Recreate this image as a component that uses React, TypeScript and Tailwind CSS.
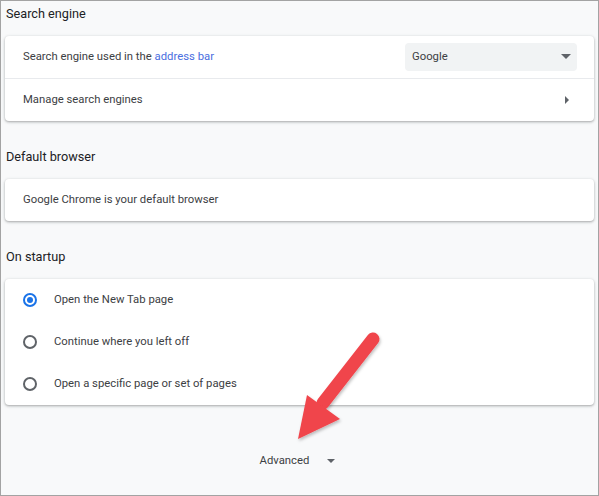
import React from "react";

const font = { fontFamily: "Roboto, 'Liberation Sans', sans-serif" };

function Card({ children }: { children: React.ReactNode }) {
  return (
    <div className="bg-white rounded-[4px] shadow-[0_1px_2px_rgba(60,64,67,0.3),0_1px_3px_1px_rgba(60,64,67,0.12)] flex flex-col">
      {children}
    </div>
  );
}

function Heading({ children, first }: { children: React.ReactNode; first?: boolean }) {
  return (
    <div className={`${first ? "pt-[3px]" : "mt-[26px]"} pb-[12px] pl-[1px] leading-[20px] text-[12.7px] text-[#202124]`}>
      {children}
    </div>
  );
}

function Radio({ checked }: { checked?: boolean }) {
  return (
    <div
      className={`w-[14px] h-[14px] rounded-full border-2 flex items-center justify-center ${
        checked ? "border-[#1a73e8]" : "border-[#5f6368]"
      }`}
    >
      {checked && <div className="w-[6px] h-[6px] rounded-full bg-[#1a73e8]" />}
    </div>
  );
}

export default function App() {
  return (
    <div style={font} className="relative w-[599px] h-[496px] border border-[#a3a3a3] bg-[#f8f9fa] overflow-hidden">
      <div className="px-[4px]">
        <Heading first>Search engine</Heading>
        <Card>
          <div className="h-[42px] flex items-center pl-[18px] pr-[17px] text-[11.3px] text-[#3c4043]">
            <span className="flex-1">
              Search engine used in the <span className="text-[#4a6ee0]">address bar</span>
            </span>
            <div className="w-[172px] h-[28px] rounded-[4px] bg-[#f1f3f4] flex items-center pl-[7px] pr-[6px] text-[11.3px] text-[#3c4043]">
              <span className="flex-1">Google</span>
              <svg width="10" height="6" viewBox="0 0 10 6">
                <path d="M0 0 L10 0 L5 5 Z" fill="#5f6368" />
              </svg>
            </div>
          </div>
          <div className="h-px bg-[#e8eaed]" />
          <div className="h-[42px] flex items-center pl-[18px] pr-[24px] text-[11.3px] text-[#3c4043]">
            <span className="flex-1">Manage search engines</span>
            <svg width="5" height="8" viewBox="0 0 5 8">
              <path d="M0 0 L4 4 L0 8 Z" fill="#5f6368" />
            </svg>
          </div>
        </Card>

        <Heading>Default browser</Heading>
        <Card>
          <div className="h-[42px] flex items-center pl-[18px] text-[11.3px] text-[#3c4043]">
            Google Chrome is your default browser
          </div>
        </Card>

        <Heading>On startup</Heading>
        <Card>
          {[
            { label: "Open the New Tab page", checked: true },
            { label: "Continue where you left off" },
            { label: "Open a specific page or set of pages" },
          ].map((r, i) => (
            <div key={i} className="h-[42px] flex items-center pl-[18px] text-[11.3px] text-[#3c4043]">
              <Radio checked={r.checked} />
              <span className="ml-[17px]">{r.label}</span>
            </div>
          ))}
        </Card>

        <div className="mt-[48px] flex items-center justify-center pr-[4px] text-[11.3px] text-[#3c4043]">
          <span>Advanced</span>
          <svg className="ml-[18px]" width="8" height="5" viewBox="0 0 8 5">
            <path d="M0 0 L8 0 L4 4 Z" fill="#5f6368" />
          </svg>
        </div>
      </div>

      <svg className="absolute left-0 top-0 pointer-events-none" width="599" height="496" viewBox="0 0 599 496">
        <defs>
          <filter id="sh" x="-20%" y="-20%" width="140%" height="140%">
            <feDropShadow dx="1" dy="2" stdDeviation="1.5" floodColor="#000" floodOpacity="0.25" />
          </filter>
        </defs>
        <g filter="url(#sh)">
          <line x1="372" y1="338" x2="322" y2="402" stroke="#f0444b" strokeWidth="13" strokeLinecap="round" />
          <path d="M297 438 L306 394 L339 418 Z" fill="#f0444b" />
        </g>
      </svg>
    </div>
  );
}
